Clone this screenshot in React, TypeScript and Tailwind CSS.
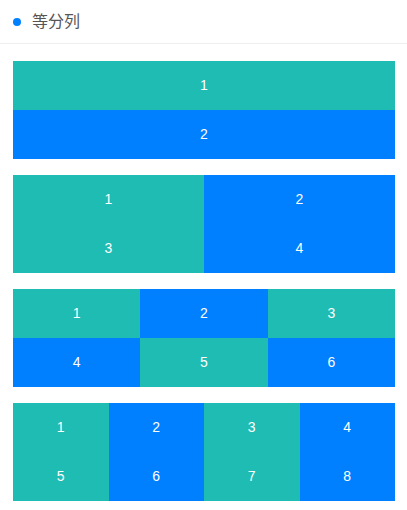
const TEAL = "bg-[#1ebcb3]"
const BLUE = "bg-[#0080ff]"

// Each grid: columns and cell count (always two rows)
const grids = [
  { cols: "grid-cols-1", count: 2 },
  { cols: "grid-cols-2", count: 4 },
  { cols: "grid-cols-3", count: 6 },
  { cols: "grid-cols-4", count: 8 },
]

export default function App() {
  return (
    <div className="w-[407px] min-h-[510px] bg-white" style={{ fontFamily: '"Liberation Sans", "Noto Sans CJK SC", sans-serif' }}>
      {/* Header */}
      <div className="flex h-[44px] items-center border-b border-[#eeeeee] pl-[13px]">
        <span className="h-[8px] w-[8px] rounded-full bg-[#0080ff]" />
        <span className="ml-[11px] text-[16px] text-[#555555]">等分列</span>
      </div>

      {/* Grids */}
      <div className="flex flex-col gap-[16px] pl-[13px] pr-[12px] pt-[17px]">
        {grids.map((g, gi) => (
          <div key={gi} className={`grid ${g.cols}`}>
            {Array.from({ length: g.count }).map((_, i) => (
              <div
                key={i}
                className={`flex h-[49px] items-center justify-center text-[14px] text-white ${i % 2 === 0 ? TEAL : BLUE}`}
              >
                {i + 1}
              </div>
            ))}
          </div>
        ))}
      </div>
    </div>
  )
}
